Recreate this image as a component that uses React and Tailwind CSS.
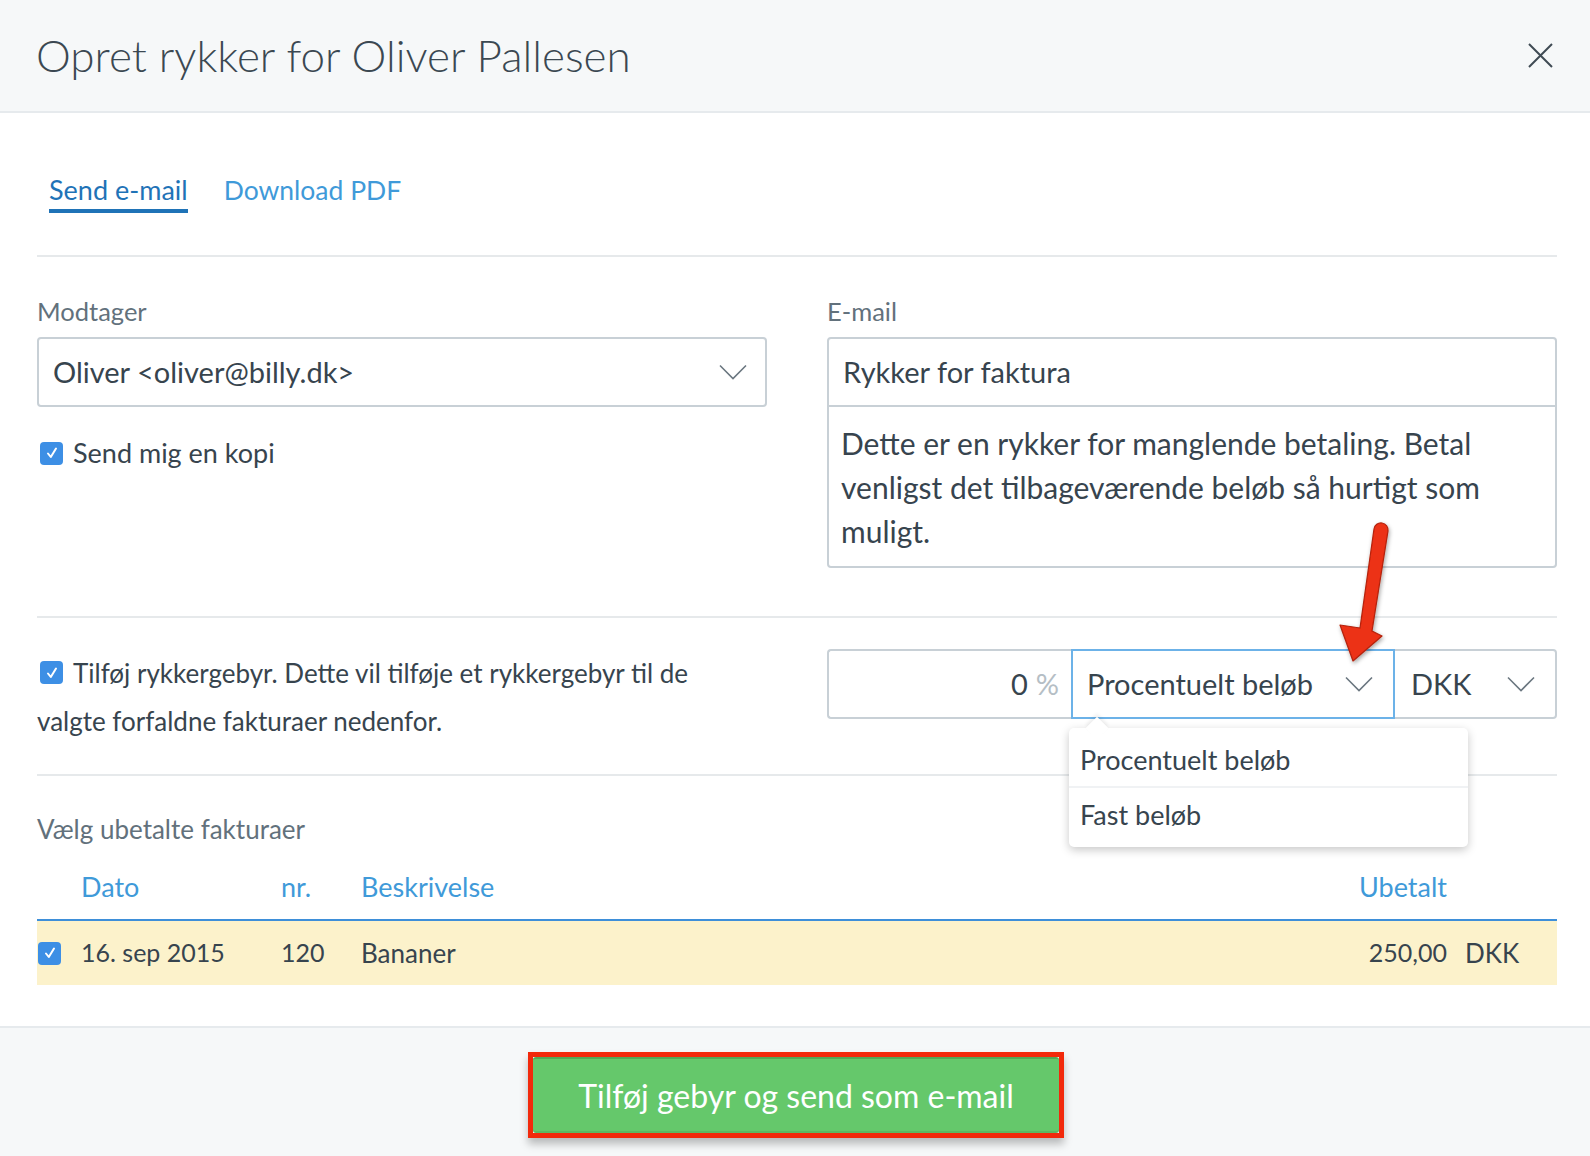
import React from 'react';

const FONT = { fontFamily: 'Lato, "Open Sans", sans-serif' };

const Chevron = ({ className = '' }) => (
  <svg width="28" height="16" viewBox="0 0 28 16" className={className}>
    <path d="M1 1.5 L14 14.5 L27 1.5" fill="none" stroke="#6b7780" strokeWidth="1.6" />
  </svg>
);

const Check = () => (
  <span className="flex h-[23px] w-[23px] shrink-0 items-center justify-center rounded-[4px] bg-[#3d8fe5]">
    <svg width="14" height="14" viewBox="0 0 14 14">
      <path d="M3 7.5 L5.8 11 L11 2.5" fill="none" stroke="white" strokeWidth="2" strokeLinecap="round" strokeLinejoin="round" />
    </svg>
  </span>
);

const Arrow = () => (
  <svg width="90" height="170" viewBox="0 0 90 170" className="absolute left-[1318px] top-[508px]" style={{ overflow: 'visible' }}>
    <defs>
      <filter id="sh" x="-50%" y="-20%" width="200%" height="140%">
        <feDropShadow dx="1" dy="2" stdDeviation="2" floodColor="#000" floodOpacity="0.35" />
      </filter>
    </defs>
    <g filter="url(#sh)">
      <path
        d="M56 21 L42 120 L22 117 L35 153 L64 128 L54 123 L70 23 A7 7 0 0 0 56 21 Z"
        fill="#ec3014"
        stroke="#b3220b"
        strokeWidth="1.2"
        strokeLinejoin="round"
      />
    </g>
  </svg>
);

export default function App() {
  return (
    <div className="relative h-[1156px] w-[1590px] overflow-hidden bg-white text-[#37444e]" style={FONT}>
      {/* header */}
      <div className="flex h-[113px] items-center justify-between border-b-2 border-[#e6eaed] bg-[#f6f8f9] pl-[36px] pr-[37px]">
        <h1 className="pb-[2px] text-[44px] font-light text-[#3b4852]">Opret rykker for Oliver Pallesen</h1>
        <svg width="25" height="25" viewBox="0 0 25 25">
          <path d="M1 1 L24 24 M24 1 L1 24" stroke="#3f4b54" strokeWidth="2" />
        </svg>
      </div>

      <div className="pl-[37px] pr-[33px]">
        {/* tabs */}
        <div className="flex h-[144px] items-end gap-[36px] border-b-2 border-[#e6e9eb] pb-[42px] pl-[12px]">
          <div className="border-b-4 border-[#1f73b7] pb-[3px] text-[27px] leading-[32px] text-[#1f73b7]">Send e-mail</div>
          <div className="pb-[7px] text-[26.5px] leading-[32px] text-[#3f9ad9]">Download PDF</div>
        </div>

        {/* recipient / email */}
        <div className="flex gap-[60px] border-b-2 border-[#e6e9eb] pb-[48px] pt-[38px]">
          <div className="w-[730px]">
            <div className="mb-[10px] text-[25.5px] leading-[32px] text-[#62717c]">Modtager</div>
            <div className="flex h-[70px] items-center justify-between rounded-[4px] border-2 border-[#c8d0d6] pl-[14px] pr-[18px]">
              <span className="text-[29px]">Oliver &lt;oliver@billy.dk&gt;</span>
              <Chevron />
            </div>
            <div className="mt-[31px] flex h-[30px] items-center gap-[10px] pl-[3px]">
              <Check />
              <span className="text-[27px]">Send mig en kopi</span>
            </div>
          </div>
          <div className="flex-1">
            <div className="mb-[10px] text-[25.5px] leading-[32px] text-[#62717c]">E-mail</div>
            <div className="rounded-[4px] border-2 border-[#c8d0d6]">
              <div className="flex h-[68px] items-center border-b-2 border-[#c8d0d6] pl-[14px] text-[29px]">Rykker for faktura</div>
              <div className="pb-[13px] pl-[12px] pr-[12px] pt-[14px] text-[30px] leading-[44px]">
                Dette er en rykker for manglende betaling. Betal
                <br />
                venligst det tilbageværende beløb så hurtigt som
                <br />
                muligt.
              </div>
            </div>
          </div>
        </div>

        {/* fee */}
        <div className="flex gap-[60px] border-b-2 border-[#e6e9eb] pb-[29px] pt-[31px]">
          <div className="w-[730px] text-[26px] leading-[48px]">
            <span className="relative top-[4px] mr-[10px] inline-flex pl-[3px] pt-[8px] align-top">
              <Check />
            </span>
            Tilføj rykkergebyr. Dette vil tilføje et rykkergebyr til de
            <br />
            valgte forfaldne fakturaer nedenfor.
          </div>
          <div className="relative flex h-[70px] flex-1 text-[29px]">
            <div className="flex w-[244px] items-center justify-end rounded-l-[4px] border-2 border-r-0 border-[#c8d0d6] pr-[12px]">
              <span>0</span>
              <span className="ml-[8px] text-[#b5bec5]">%</span>
            </div>
            <div className="flex w-[324px] items-center justify-between border-2 border-[#6cb2e8] pl-[14px] pr-[20px]">
              <span className="w-[228px] overflow-hidden whitespace-nowrap">Procentuelt beløb</span>
              <Chevron />
            </div>
            <div className="flex flex-1 items-center justify-between rounded-r-[4px] border-2 border-l-0 border-[#c8d0d6] pl-[16px] pr-[20px]">
              <span>DKK</span>
              <Chevron />
            </div>

            {/* open menu */}
            <div className="absolute left-[242px] top-[79px] z-10 w-[399px] rounded-[5px] bg-white pb-[5px] pt-[6px] shadow-[0_3px_10px_rgba(0,0,0,0.22)]">
              <div className="absolute -top-[8px] left-[20px] h-[16px] w-[16px] rotate-45 bg-white shadow-[-2px_-2px_4px_rgba(0,0,0,0.08)]" />
              <div className="relative flex h-[54px] items-center border-b-2 border-[#f0f2f4] bg-white pl-[11px] text-[27px]">Procentuelt beløb</div>
              <div className="flex h-[54px] items-center pl-[11px] text-[27px]">Fast beløb</div>
            </div>
          </div>
        </div>

        {/* invoices */}
        <div className="pt-[38px]">
          <div className="text-[26px] leading-[30px] text-[#62717c]">Vælg ubetalte fakturaer</div>
          <div className="flex h-[77px] items-end border-b-2 border-[#3e8fd9] pb-[17px] text-[27px] leading-[30px] text-[#3f9ad9]">
            <div className="w-[44px]" />
            <div className="w-[200px]">Dato</div>
            <div className="w-[80px]">nr.</div>
            <div className="flex-1">Beskrivelse</div>
            <div>Ubetalt</div>
            <div className="w-[110px]" />
          </div>
          <div className="flex h-[64px] items-center bg-[#fcf2cb] text-[26px]">
            <div className="w-[44px] pl-[1px]">
              <Check />
            </div>
            <div className="w-[200px] text-[25px]">16. sep 2015</div>
            <div className="w-[80px] text-[25px]">120</div>
            <div className="flex-1">Bananer</div>
            <div className="text-[25px]">250,00</div>
            <div className="w-[110px] pl-[18px]">DKK</div>
          </div>
        </div>
      </div>

      {/* footer */}
      <div className="absolute bottom-0 left-0 right-0 flex h-[130px] items-start justify-center border-t-2 border-[#e6eaed] bg-[#f6f8f9] pt-[24px]">
        <div className="ml-[2px] border-[5px] border-[#f2290b] shadow-[0_6px_8px_rgba(0,0,0,0.25)]">
          <div className="flex h-[76px] w-[526px] items-center justify-center rounded-[3px] border-t-2 border-[#52a857] bg-[#65c86b] text-[32px] text-white shadow-[inset_0_-2px_0_rgba(0,0,0,0.08)]">
            Tilføj gebyr og send som e-mail
          </div>
        </div>
      </div>

      <Arrow />
    </div>
  );
}
